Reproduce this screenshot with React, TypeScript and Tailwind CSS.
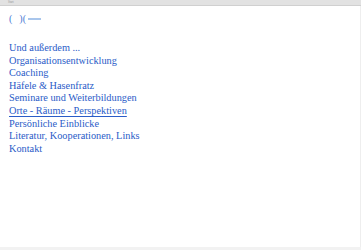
import React from 'react';

const menu = [
  'Und außerdem ...',
  'Organisationsentwicklung',
  'Coaching',
  'Häfele & Hasenfratz',
  'Seminare und Weiterbildungen',
  'Orte - Räume - Perspektiven',
  'Persönliche Einblicke',
  'Literatur, Kooperationen, Links',
  'Kontakt',
];

export default function App() {
  return (
    <div className="w-[361px] h-[250px] bg-white flex flex-col overflow-hidden" style={{ fontFamily: '"Liberation Serif", serif' }}>
      {/* top strip */}
      <div className="h-[6px] bg-[#e2e2e2] border-b border-[#d0d0d0] flex items-center px-2">
        <span className="text-[3px] leading-none text-[#999]">Start</span>
      </div>

      <div className="flex-1 flex border-r border-[#eeeeee]">
        <div className="pl-[9px] pt-[8px]">
          {/* logo */}
          <div className="flex items-center text-[#4a7ad4] text-[10px] leading-none">
            <span>(</span>
            <span className="w-[7px]" />
            <span>)(</span>
            <span className="ml-[2px] w-[13px] h-[2px] bg-[#a9c6ec]" />
          </div>

          <nav className="mt-[18px] flex flex-col">
            {menu.map((item) => (
              <a
                key={item}
                href="#"
                className={
                  'text-[10.3px] leading-[12.6px] text-[#2a5cc8] ' +
                  (item.startsWith('Orte') ? 'underline underline-offset-2' : 'no-underline')
                }
              >
                {item}
              </a>
            ))}
          </nav>
        </div>
      </div>

      <div className="h-[3px] bg-[#f2f2f2]" />
    </div>
  );
}
